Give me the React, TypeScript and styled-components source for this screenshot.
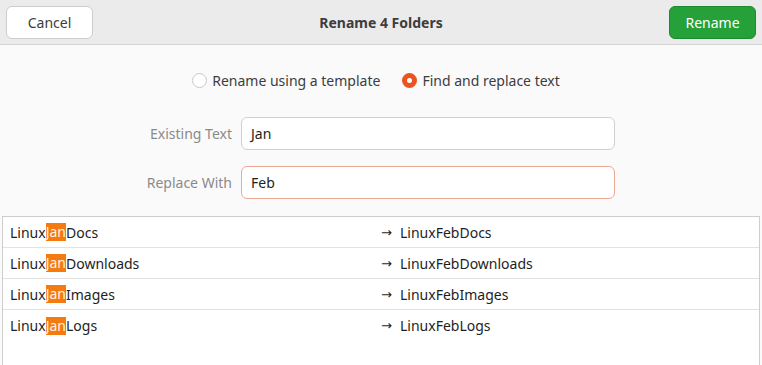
import React from "react";
import styled, { createGlobalStyle } from "styled-components";

const GlobalStyle = createGlobalStyle`
  html, body {
    margin: 0;
    padding: 0;
    background: #fafafa;
  }
  body {
    font-family: "Noto Sans", "Open Sans", sans-serif;
    font-size: 14px;
    color: #3d3d3d;
  }
`;

const files = ["Docs", "Downloads", "Images", "Logs"];

const App = () => {
  return (
    <>
      <GlobalStyle />
      <Window>
        <HeaderBar>
          <Button>Cancel</Button>
          <Title>Rename 4 Folders</Title>
          <Button primary>Rename</Button>
        </HeaderBar>

        <RadioRow>
          <RadioItem>
            <Radio />
            Rename using a template
          </RadioItem>
          <RadioItem>
            <Radio checked />
            Find and replace text
          </RadioItem>
        </RadioRow>

        <Form>
          <Label>Existing Text</Label>
          <Input>Jan</Input>
          <Label>Replace With</Label>
          <Input focused>Feb</Input>
        </Form>

        <List>
          {files.map((name) => (
            <Row key={name}>
              <Cell>
                Linux<Match>Jan</Match>
                {name}
              </Cell>
              <Cell>
                <Arrow>→</Arrow>
                LinuxFeb{name}
              </Cell>
            </Row>
          ))}
        </List>
      </Window>
    </>
  );
};

export default App;

const Window = styled.div`
  width: 762px;
  height: 365px;
  display: flex;
  flex-direction: column;
  background: #fafafa;
  overflow: hidden;
`;

const HeaderBar = styled.div`
  height: 45px;
  box-sizing: border-box;
  display: flex;
  align-items: center;
  justify-content: space-between;
  padding: 0 6px;
  background: #ebebeb;
  border-bottom: 1px solid #d4d4d4;
  flex-shrink: 0;
`;

const Title = styled.div`
  font-weight: 700;
  font-size: 14px;
  color: #3d3d3d;
`;

const Button = styled.div<{ primary?: boolean }>`
  width: 87px;
  height: 33px;
  box-sizing: border-box;
  display: flex;
  align-items: center;
  justify-content: center;
  border-radius: 6px;
  border: 1px solid ${(p) => (p.primary ? "#1c8a2e" : "#d0ccc8")};
  background: ${(p) => (p.primary ? "#26a13a" : "#ffffff")};
  color: ${(p) => (p.primary ? "#ffffff" : "#3d3d3d")};
  font-size: 14px;
  margin-top: 1px;
`;

const RadioRow = styled.div`
  display: flex;
  justify-content: center;
  gap: 22px;
  margin-top: 25px;
  height: 20px;
  padding-right: 10px;
`;

const RadioItem = styled.label`
  display: flex;
  align-items: center;
  gap: 5px;
  font-size: 14px;
  color: #3d3d3d;
`;

const Radio = styled.span<{ checked?: boolean }>`
  width: 15px;
  height: 15px;
  box-sizing: border-box;
  border-radius: 50%;
  border: ${(p) => (p.checked ? "5px solid #e95420" : "1px solid #c8c8c8")};
  background: #ffffff;
`;

const Form = styled.div`
  display: grid;
  grid-template-columns: 232px 374px;
  column-gap: 9px;
  row-gap: 16px;
  align-items: center;
  margin-top: 27px;
`;

const Label = styled.div`
  text-align: right;
  color: #8a8a8a;
  font-size: 14px;
`;

const Input = styled.div<{ focused?: boolean }>`
  height: 33px;
  box-sizing: border-box;
  display: flex;
  align-items: center;
  padding: 0 9px;
  border-radius: 6px;
  border: 1px solid ${(p) => (p.focused ? "#eda797" : "#cfcfcf")};
  background: #ffffff;
  color: #1e1e1e;
  font-size: 14px;
`;

const List = styled.div`
  flex: 1;
  margin: 17px 2px 0;
  border: 1px solid #cdcdcd;
  border-bottom: none;
  background: #ffffff;
`;

const Row = styled.div`
  display: grid;
  grid-template-columns: 1fr 1fr;
  height: 31px;
  box-sizing: border-box;
  align-items: center;
  border-bottom: 1px solid #e2e2e2;
  &:last-child {
    border-bottom: none;
  }
`;

const Cell = styled.div`
  display: flex;
  align-items: center;
  padding-left: 7px;
  color: #1e1e1e;
  font-size: 14px;
  white-space: nowrap;

  & + & {
    padding-left: 0;
  }
`;

const Match = styled.span`
  background: #f37b12;
  color: #fff4e4;
  line-height: 18px;
`;

const Arrow = styled.span`
  width: 19px;
  font-family: "DejaVu Sans", sans-serif;
  font-size: 13px;
`;
